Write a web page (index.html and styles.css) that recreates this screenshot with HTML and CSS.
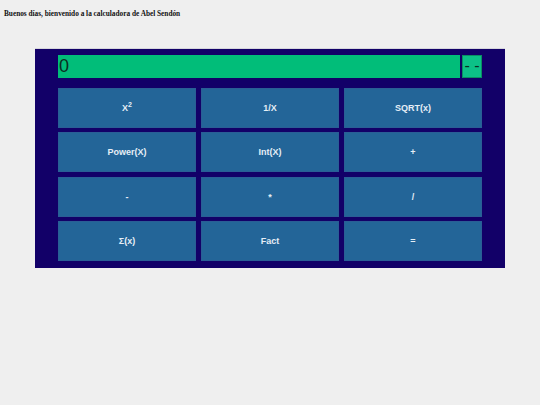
FILE: index.html
```html
<!DOCTYPE html>
<html lang="es">
<head>
<meta charset="utf-8">
<title>Calculadora</title>
<link rel="stylesheet" href="styles.css">
</head>
<body>
<h1 class="greeting">Buenos días, bienvenido a la calculadora de Abel Sendón</h1>
<div class="calc">
  <div class="screen-row">
    <div class="screen">0</div>
    <div class="memory">- -</div>
  </div>
  <div class="keys">
    <button class="key">X<sup>2</sup></button>
    <button class="key">1/X</button>
    <button class="key">SQRT(x)</button>
    <button class="key">Power(X)</button>
    <button class="key">Int(X)</button>
    <button class="key">+</button>
    <button class="key">-</button>
    <button class="key">*</button>
    <button class="key">/</button>
    <button class="key">Σ(x)</button>
    <button class="key">Fact</button>
    <button class="key">=</button>
  </div>
</div>
</body>
</html>
```
FILE: styles.css
```css
html, body {
  margin: 0;
  padding: 0;
  background: #efefef;
}

.greeting {
  font-family: "Liberation Serif", "Times New Roman", serif;
  font-weight: bold;
  font-size: 7.3px;
  line-height: 8px;
  color: #111;
  margin: 10px 0 0 4px;
}

.calc {
  margin: 30px 0 0 35px;
  width: 470px;
  box-sizing: border-box;
  background: #120068;
  padding: 6px 23px 7px 23px;
  border-top: 1px solid #d6d6dc;
}

.screen-row {
  display: flex;
  gap: 2px;
  height: 23px;
}

.screen {
  flex: 1;
  background: #01bd79;
  color: #0b2e22;
  font-family: "Liberation Sans", Arial, sans-serif;
  font-size: 18px;
  line-height: 23px;
  padding-left: 1px;
}

.memory {
  width: 20px;
  box-sizing: border-box;
  background: #0cc187;
  border: 1px solid #0a8f63;
  color: #0b2e22;
  font-family: "Liberation Sans", Arial, sans-serif;
  font-size: 16px;
  line-height: 20px;
  text-align: center;
  white-space: nowrap;
  overflow: hidden;
}

.keys {
  margin-top: 10px;
  display: grid;
  grid-template-columns: repeat(3, 138px);
  grid-auto-rows: 40px;
  column-gap: 5px;
  row-gap: 4.33px;
}

.key {
  margin: 0;
  padding: 0;
  background: #236598;
  border: 1px solid #2a5e95;
  color: #e6eef6;
  font-family: "Liberation Sans", Arial, sans-serif;
  font-weight: bold;
  font-size: 9px;
  cursor: pointer;
}

.key sup {
  font-size: 7px;
  line-height: 0;
  vertical-align: 4px;
}
```
